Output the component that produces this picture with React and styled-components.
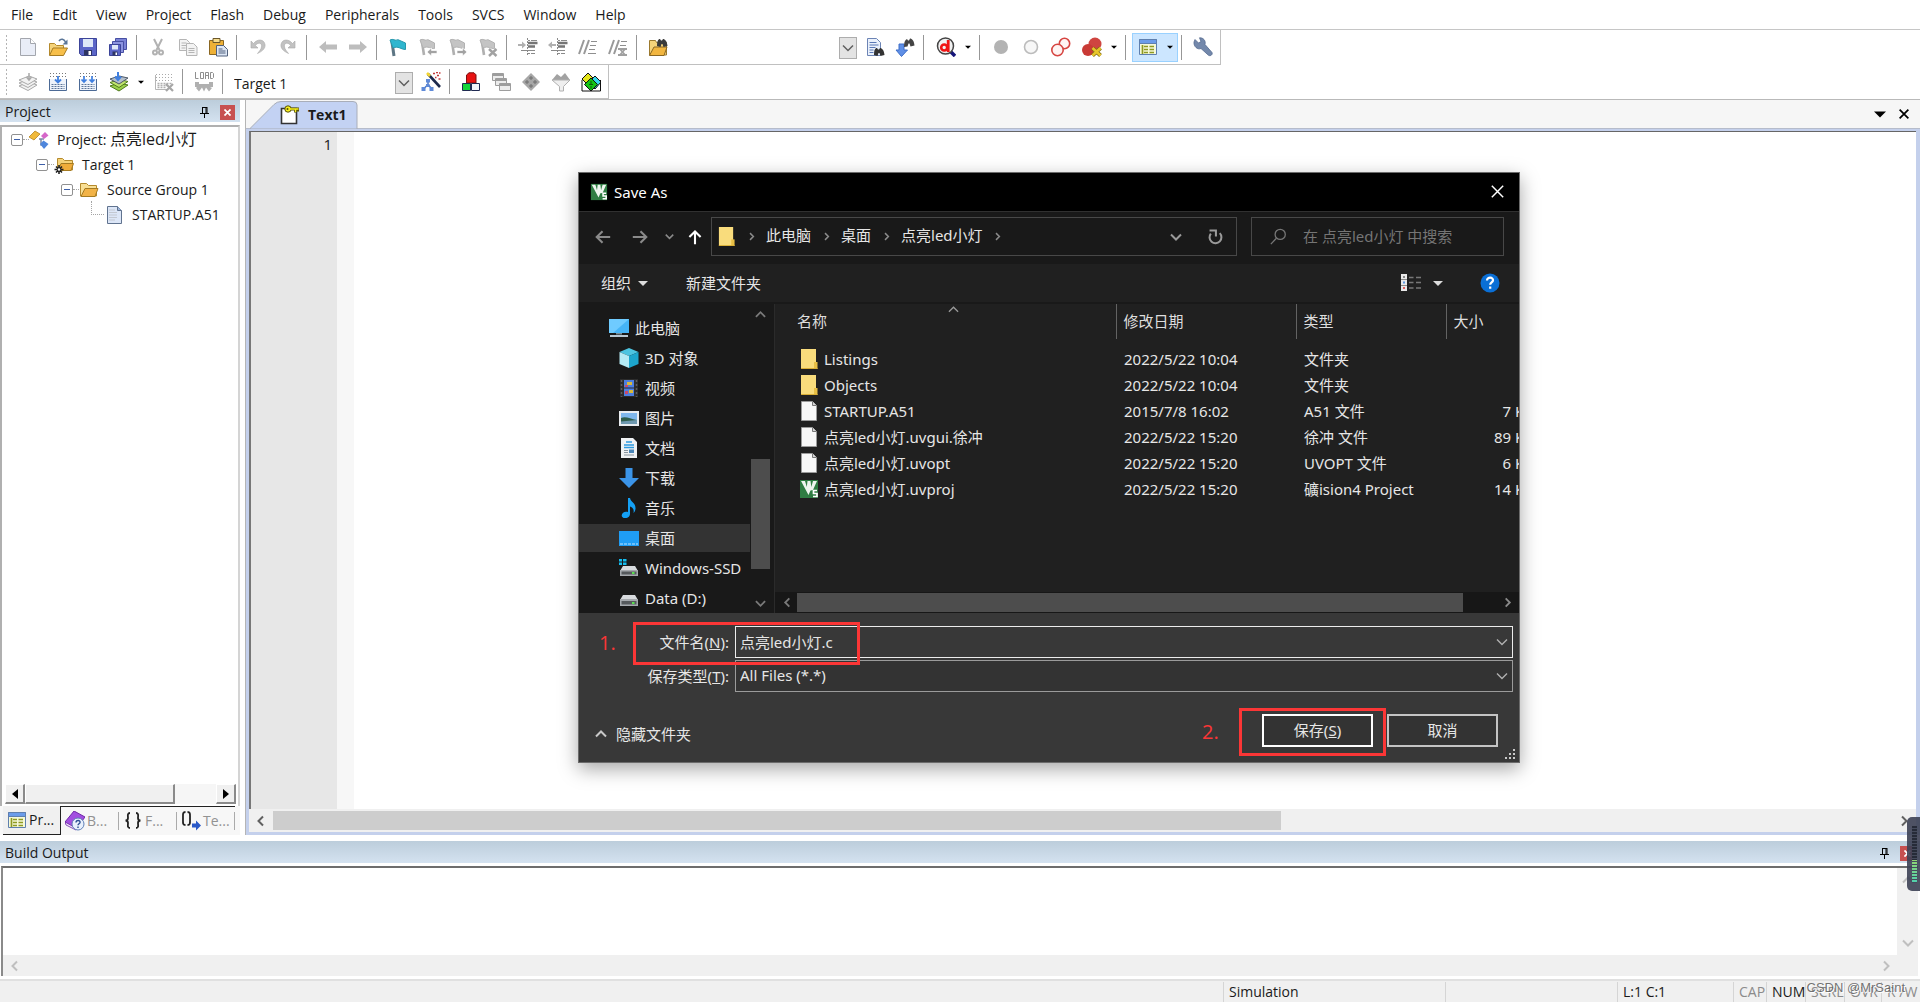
import styled, { createGlobalStyle, css } from "styled-components";

const GlobalStyle = createGlobalStyle`
  * {
    box-sizing: border-box;
  }

  body {
    margin: 0;
    background: #fff;
    color: #1a1a1a;
    font-family: "Open Sans", "Noto Sans CJK SC", sans-serif;
    font-size: 14px;
    line-height: 20px;
  }

  button,
  input,
  select,
  textarea {
    font: inherit;
    color: inherit;
    border: 0;
    padding: 0;
    margin: 0;
    background: none;
    border-radius: 0;
    outline: none;
  }

  svg {
    display: block;
    flex: none;
  }
`;

const Page = styled.div`
  position: relative;
  display: flex;
  flex-direction: column;
  height: 100vh;
  overflow: hidden;
`;

/* ---------- menu and toolbars ---------- */

const MenuBar = styled.nav`
  display: flex;
  gap: 19px;
  height: 29px;
  padding: 0 11px;
  align-items: center;
`;

const MenuItem = styled.button`
  white-space: nowrap;
`;

const ToolbarArea = styled.div`
  border-top: 1px solid #c6c6c6;
  border-bottom: 1px solid #b9b9b9;
`;

const Toolbar = styled.div`
  display: flex;
  align-items: center;
  width: max-content;
  height: 35px;
  padding-right: 2px;
  border-right: 1px solid #c0c0c0;
  border-bottom: 1px solid #c0c0c0;

  &:last-child {
    height: 34px;
  }
`;

const Grip = styled.span`
  width: 13px;
  height: 27px;
  background: radial-gradient(circle, #b4b4b4 1px, transparent 1px) 5px 0 / 3px 4px repeat-y;
`;

const ToolButton = styled.button`
  display: flex;
  align-items: center;
  justify-content: center;
  width: ${(props) => (props.$menu ? "46px" : "30px")};
  height: 29px;
  ${(props) =>
    props.$active &&
    css`
      background: #cce6ff;
      border: 1px solid #99d1ff;
    `}
`;

const CaretSlot = styled.span`
  margin-left: 9px;
`;

const Separator = styled.span`
  width: 1px;
  height: 25px;
  margin: 0 6px 0 3px;
  background: #979797;
`;

const ComboWrap = styled.div`
  position: relative;
  display: flex;
  align-items: center;
  width: ${(props) => props.$width};
  height: 24px;
  margin: 2px 3px 0 4px;
`;

const ComboSelect = styled.select`
  appearance: none;
  width: 100%;
  height: 24px;
  padding: 3px 0 0 1px;
`;

const ComboArrow = styled.span`
  position: absolute;
  right: 0;
  top: 1px;
  display: flex;
  align-items: center;
  justify-content: center;
  width: 18px;
  height: 22px;
  background: #e3e3e3;
  border: 1px solid #adadad;
  pointer-events: none;
`;

/* ---------- docked panels ---------- */

const Workspace = styled.div`
  display: flex;
  gap: 5px;
  flex: 1;
  min-height: 0;
  padding-bottom: 6px;
`;

const ProjectPanel = styled.aside`
  display: flex;
  flex-direction: column;
  width: 240px;
`;

const PanelHeader = styled.header`
  display: flex;
  align-items: center;
  height: 22px;
  padding: 2px 5px 0;
  background: linear-gradient(#bccddb, #d4e2f0);
`;

const PanelTitle = styled.h2`
  flex: 1;
  margin: 0;
  font-size: 14px;
  font-weight: 400;
`;

const PinButton = styled.button`
  margin-right: 11px;
`;

const CloseButton = styled.button`
  display: flex;
  align-items: center;
  justify-content: center;
  width: 15px;
  height: 15px;
  background: #c75050;
`;

const TreeBox = styled.div`
  display: flex;
  flex-direction: column;
  flex: 1;
  margin-top: 3px;
  padding: 0 2px 2px 3px;
  border: 2px solid #d4d4d4;
  border-left-color: #b0b0b0;
  border-top-color: #b0b0b0;
  border-bottom: 0;
`;

const Tree = styled.ul`
  flex: 1;
  margin: 0;
  padding: 0;
  list-style: none;
`;

const TreeRow = styled.li`
  display: flex;
  align-items: center;
  height: 25px;
  padding-left: ${(props) => `${props.$depth * 25 + 6}px`};
  white-space: nowrap;
`;

const TreeLabel = styled.span`
  margin-left: 8px;
`;

const ProjectName = styled.span`
  font-size: 16px;
`;

const Expander = styled.button`
  width: 12px;
  height: 12px;
  display: flex;
  align-items: center;
  justify-content: center;
  border: 1px solid #919191;
  border-radius: 2px;
  background: #fff;

  &::after {
    content: "";
    width: 6px;
    height: 1px;
    background: #3d5fa8;
  }
`;

const Dots = styled.span`
  width: 6px;
  border-top: 1px dotted #a5a5a5;
`;

const Elbow = styled.span`
  width: 13px;
  height: 14px;
  margin: 0 0 14px 5px;
  border-left: 1px dotted #a5a5a5;
  border-bottom: 1px dotted #a5a5a5;
`;

const ClassicScroll = styled.div`
  display: flex;
  height: 20px;
  background: #f6f6f6;
`;

const ClassicPart = styled.button`
  display: flex;
  align-items: center;
  justify-content: center;
  width: ${(props) => props.$width || "20px"};
  background: #f0f0f0;
  border: 1px solid #fff;
  border-right: 2px solid #8a8a8a;
  border-bottom: 2px solid #8a8a8a;

  &:last-child {
    margin-left: auto;
  }
`;

const DockTabs = styled.div`
  display: flex;
  height: 29px;
  padding-left: 3px;
  background: #f7f7f7;
`;

const DockTab = styled.button`
  position: relative;
  display: flex;
  align-items: center;
  gap: 2px;
  width: 58px;
  padding-left: 4px;
  color: #929292;
  border-top: 1px solid #222;
  white-space: nowrap;

  &::after {
    content: "";
    position: absolute;
    right: 0;
    top: 5px;
    height: 18px;
    border-right: 1px solid #aaa;
  }

  ${(props) =>
    props.$active &&
    css`
      color: #1a1a1a;
      background: #f0f0f0;
      border-top: 0;
      border-right: 1px solid #222;
      border-bottom: 1px solid #222;
      &::after {
        display: none;
      }
    `}
`;

/* ---------- editor ---------- */

const Editor = styled.main`
  display: flex;
  flex-direction: column;
  flex: 1;
  min-width: 0;
  border-left: 1px solid #b5b5b5;
`;

const TabStrip = styled.div`
  display: flex;
  align-items: flex-end;
  height: 29px;
  padding: 0 11px 0 4px;
  background: #f6f6f6;
  border-bottom: 1px solid #b6bccb;
`;

const FileTab = styled.button`
  position: relative;
  display: flex;
  align-items: center;
  gap: 9px;
  width: 108px;
  height: 27px;
  padding-left: 29px;
  font-weight: 700;
`;

const TabShape = styled.svg`
  position: absolute;
  inset: 0;
`;

const TabIcon = styled.span`
  position: relative;
`;

const TabText = styled.span`
  position: relative;
`;

const StripButtons = styled.div`
  display: flex;
  align-items: center;
  gap: 13px;
  height: 28px;
  margin-left: auto;
`;

const EditorFrame = styled.div`
  display: flex;
  flex-direction: column;
  flex: 1;
  border: 3px solid #c4d0ec;
  border-top-width: 2px;
  border-right-width: 4px;
`;

const CodeArea = styled.div`
  display: flex;
  flex: 1;
  border-top: 1px solid #666;
  border-left: 2px solid #777;
`;

const Gutter = styled.div`
  width: 86px;
  padding: 2px 5px 0 0;
  text-align: right;
  font-size: 15px;
  background: #e7e7e7;
`;

const FoldMargin = styled.div`
  width: 17px;
  background: #f7f7f7;
`;

const CodeInput = styled.textarea`
  flex: 1;
  resize: none;
`;

const ScrollTrack = styled.div`
  display: flex;
  align-items: center;
  flex-direction: ${(props) => (props.$vertical ? "column" : "row")};
  ${(props) => (props.$vertical ? "width" : "height")}: ${(props) => props.$size || "21px"};
  padding: ${(props) => (props.$vertical ? "2px 0" : "0 2px")};
  background: ${(props) => (props.$dark ? "#171717" : "#f0f0f0")};
`;

const ScrollArrow = styled.button`
  display: flex;
  align-items: center;
  justify-content: center;
  width: 20px;
  height: 20px;

  &:last-child {
    ${(props) => (props.$vertical ? "margin-top" : "margin-left")}: auto;
  }
`;

const EditorThumb = styled.span`
  width: calc(61% - 6px);
  height: 19px;
  margin-left: 2px;
  background: #cdcdcd;
`;

/* ---------- build output and status bar ---------- */

const BuildPanel = styled.section`
  display: flex;
  flex-direction: column;
  height: 138px;
`;

const BuildBox = styled.div`
  display: flex;
  flex-direction: column;
  flex: 1;
  margin: 3px 2px 3px 1px;
  border-top: 2px solid #6d6d6d;
  border-left: 2px solid #8a8a8a;
`;

const BuildBody = styled.div`
  display: flex;
  flex: 1;
`;

const BuildText = styled.textarea`
  flex: 1;
  resize: none;
`;

const BuildBottom = styled.div`
  padding-right: 20px;
  background: #f0f0f0;
`;

const StatusBar = styled.footer`
  display: flex;
  height: 23px;
  padding-top: 1px;
  background: #f0f0f0;
  border-top: 2px solid #e0e0e0;
`;

const StatusCell = styled.span`
  width: ${(props) => props.$width};
  padding-left: 5px;
  white-space: nowrap;
  color: ${(props) => (props.$off ? "#8b8b8b" : "#1a1a1a")};
  border-left: 1px solid #d5d5d5;
`;

const StatusSpace = styled.span`
  flex: 1;
`;

const Watermark = styled.span`
  position: absolute;
  right: 15px;
  bottom: 4px;
  font-family: "Liberation Sans", sans-serif;
  font-size: 13px;
  color: rgba(90, 90, 90, 0.85);
  text-shadow: 1px 1px 0 #fff;
`;

const LevelMeter = styled.div`
  position: absolute;
  right: 0;
  bottom: 111px;
  width: 13px;
  height: 74px;
  padding: 9px 3px 8px 5px;
  border-radius: 5px 0 0 5px;
  background: rgba(60, 64, 84, 0.9);
`;

const MeterBars = styled.div`
  height: 57px;
  background: repeating-linear-gradient(transparent 0 2px, #454b5c 2px 3px),
    linear-gradient(#262b38 60%, #8fd672 60%, #4fd1b0);
`;

/* ---------- save dialog ---------- */

const Dialog = styled.section`
  position: absolute;
  left: 578px;
  top: 172px;
  width: 942px;
  border: 1px solid #6b6b6b;
  background: #383838;
  color: #e6e6e6;
  font-family: "Noto Sans", "Noto Sans CJK SC", sans-serif;
  font-size: 15px;
  box-shadow: 0 6px 18px rgba(0, 0, 0, 0.35);
`;

const DialogTitle = styled.header`
  display: flex;
  align-items: center;
  gap: 6px;
  height: 39px;
  padding: 0 15px 1px 11px;
  background: #000;
  border-bottom: 1px solid #303030;
  color: #fff;
`;

const DialogName = styled.h1`
  flex: 1;
  margin: 0;
  font-size: 15px;
  font-weight: 400;
`;

const NavRow = styled.div`
  display: flex;
  align-items: center;
  height: 52px;
  padding: 0 15px 3px;
  background: #191919;
`;

const NavButton = styled.button`
  margin-right: ${(props) => props.$gap};
`;

const AddressBar = styled.div`
  display: flex;
  align-items: center;
  flex: 1;
  height: 39px;
  padding: 0 5px;
  border: 1px solid #484848;
`;

const Crumb = styled.a`
  padding-bottom: 3px;
  color: inherit;
  text-decoration: none;
`;

const CrumbArrow = styled.span`
  display: flex;
  justify-content: center;
  width: 30px;
`;

const AddressEnd = styled.div`
  display: flex;
  gap: 25px;
  align-items: center;
  margin-left: auto;
  padding-right: 7px;
`;

const SearchBox = styled.label`
  display: flex;
  align-items: center;
  gap: 16px;
  width: 253px;
  height: 39px;
  margin-left: 14px;
  padding-left: 18px;
  border: 1px solid #484848;
`;

const SearchInput = styled.input`
  min-width: 0;
  flex: 1;
  padding-bottom: 2px;

  &::placeholder {
    color: #757575;
    opacity: 1;
  }
`;

const CommandBar = styled.div`
  display: flex;
  align-items: center;
  height: 40px;
  padding: 0 19px 0 22px;
  background: #202020;
  border-bottom: 2px solid #191919;
`;

const Command = styled.button`
  display: flex;
  align-items: center;
  gap: 7px;
  margin-right: 38px;

  &:nth-child(2) {
    margin-right: auto;
  }
`;

const ViewButton = styled.button`
  display: flex;
  align-items: center;
  gap: 12px;
  margin-right: 37px;
`;

const DialogBody = styled.div`
  display: flex;
  height: 309px;
`;

const SideBar = styled.div`
  display: flex;
  width: 195px;
  background: #191919;
`;

const Places = styled.ul`
  flex: 1;
  margin: 0;
  padding: 10px 0 0;
  list-style: none;
  overflow: hidden;
`;

const Place = styled.li`
  display: flex;
  align-items: center;
  gap: 6px;
  height: 28px;
  margin: 0 0 2px;
  padding-left: ${(props) => (props.$root ? "30px" : "40px")};
  white-space: nowrap;
  background: ${(props) => (props.$selected ? "#333" : "none")};
`;

const SideScroll = styled.div`
  display: flex;
  flex-direction: column;
  align-items: center;
  width: 21px;
  margin-right: 3px;
`;

const SideThumb = styled.span`
  width: 19px;
  height: 110px;
  margin-top: 135px;
  background: #4d4d4d;
`;

const FileList = styled.div`
  display: flex;
  flex-direction: column;
  flex: 1;
  min-width: 0;
  background: #202020;
  border-left: 1px solid #2b2b2b;
`;

const TableClip = styled.div`
  flex: 1;
  overflow: hidden;
`;

const Table = styled.table`
  width: 759px;
  table-layout: fixed;
  border-collapse: collapse;
`;

const Th = styled.th`
  position: relative;
  width: ${(props) => props.$width};
  height: 35px;
  padding: 0 0 2px 7px;
  text-align: left;
  font-weight: 400;
  color: #dedede;
  border-left: 1px solid #636363;

  &:first-child {
    padding-left: 22px;
    border-left: 0;
  }
`;

const SortMark = styled.span`
  position: absolute;
  left: 173px;
  top: 0;
`;

const Td = styled.td`
  height: 26px;
  padding: 0 0 0 8px;
  white-space: nowrap;
  text-align: ${(props) => props.$align || "left"};
`;

const FileName = styled.span`
  display: flex;
  align-items: center;
  gap: 5px;
  padding-left: 16px;
`;

const TableGap = styled.tbody`
  height: 7px;
`;

const ListThumb = styled.span`
  width: 90%;
  height: 19px;
  background: #4d4d4d;
`;

const DialogFooter = styled.form`
  display: flex;
  flex-direction: column;
  padding: 13px 6px 15px 21px;
`;

const Field = styled.div`
  position: relative;
  display: flex;
  align-items: center;
  height: 32px;
  margin-bottom: 2px;
`;

const FieldLabel = styled.label`
  width: 129px;
  margin-right: 6px;
  text-align: right;
`;

const fieldBox = css`
  flex: 1;
  height: 32px;
  padding: 0 0 2px 4px;
`;

const NameInput = styled.input`
  ${fieldBox}
  border: 1px solid #ececec;
`;

const TypeSelect = styled.select`
  ${fieldBox}
  appearance: none;
  background: #333;
  border: 1px solid #9b9b9b;
`;

const FieldArrow = styled.span`
  position: absolute;
  right: 5px;
  top: 10px;
  pointer-events: none;
`;

const ActionRow = styled.div`
  display: flex;
  align-items: center;
  gap: 14px;
  margin-top: 20px;
  padding-right: 15px;
`;

const FolderToggle = styled.button`
  display: flex;
  align-items: center;
  gap: 9px;
  margin-right: auto;
  margin-left: -5px;
  padding-top: 6px;
`;

const ActionButton = styled.button`
  width: 111px;
  height: 33px;
  padding-bottom: 2px;
  background: #333;
  border: 2px solid ${(props) => (props.$primary ? "#fff" : "#c4c4c4")};
`;

const ResizeGrip = styled.svg`
  position: absolute;
  right: 3px;
  bottom: 2px;
`;

/* red callouts drawn over the dialog */
const Callout = styled.div`
  position: absolute;
  left: ${(props) => props.$left};
  top: ${(props) => props.$top};
  width: ${(props) => props.$width};
  height: ${(props) => props.$height};
  border: 3px solid #fb3636;
  pointer-events: none;
`;

const CalloutNumber = styled.span`
  position: absolute;
  left: ${(props) => props.$left};
  top: ${(props) => props.$top};
  font-family: "Open Sans", sans-serif;
  font-size: 20px;
  color: #fb3636;
`;

/* ---------- icons ---------- */

const Svg = ({ size = 20, children }) => (
  <svg width={size} height={size} viewBox="0 0 20 20" fill="none" aria-hidden="true">
    {children}
  </svg>
);

const Chevron = ({ dir = "down", color = "#606060", size = 12, weight = 2 }) => {
  const paths = {
    down: "M1 3.5 6 8.5 11 3.5",
    up: "M1 8.5 6 3.5 11 8.5",
    left: "M8 1.5 3.5 6 8 10.5",
    right: "M4 1.5 8.5 6 4 10.5",
  };
  return (
    <svg width={size} height={size} viewBox="0 0 12 12" fill="none" aria-hidden="true">
      <path d={paths[dir]} stroke={color} strokeWidth={weight} />
    </svg>
  );
};

const Caret = ({ color = "#000", width = 6 }) => (
  <svg width={width} height={width} viewBox="0 0 10 10" aria-hidden="true">
    <path d="M0 3h10L5 8z" fill={color} />
  </svg>
);

const Pin = () => (
  <svg width="9" height="11" viewBox="0 0 9 11" fill="none" aria-hidden="true">
    <path d="M2 0.5h5M2.5 0v6M6 0v6M7 0v6M0 6.5h9M4.5 7v4" stroke="#000" />
  </svg>
);

const Cross = ({ color = "#fff", size = 7, weight = 2 }) => (
  <svg width={size} height={size} viewBox="0 0 8 8" aria-hidden="true">
    <path d="M0.5 0.5 7.5 7.5M7.5 0.5 0.5 7.5" stroke={color} strokeWidth={weight} />
  </svg>
);

const GreyFlag = () => (
  <>
    <path d="M4 5 6 18" stroke="#b0b0b0" strokeWidth="2.6" />
    <path d="M2 3c3-2 5 1.500 8-.3L16.500 6v5.500C13 12 10 8.500 5 11z" fill="#c4c4c4" stroke="#b2b2b2" />
  </>
);

const icons = {
  newFile: (
    <>
      <path d="M2.500 1.500h10l5 5v12h-15z" fill="#e9edf7" stroke="#a3a6ad" />
      <path d="M12.500 1.500v5h5" fill="#fff" stroke="#a3a6ad" />
    </>
  ),
  open: (
    <>
      <path d="M1.500 18V6.500h5l2 2h7V12" fill="#f5d37a" stroke="#b58a2c" />
      <path d="M1.500 18.500 5 11h14.500l-4 7.500z" fill="#f7bf4a" stroke="#a57b22" />
      <path d="M11 4c2-3 5-2 6.500 1" stroke="#5b7698" strokeWidth="1.600" />
      <path d="M19.500 2.500v5h-5z" fill="#5b7698" />
    </>
  ),
  save: (
    <>
      <path d="M1.500 1.500h17v17h-15l-2-2z" fill="#5c66c8" stroke="#3c4499" />
      <path d="M5 2h10v8H5z" fill="#dfe8f8" />
      <path d="M6 13h8v5.500H6z" fill="#2d3463" />
      <path d="M10.500 14h2.500v4h-2.500z" fill="#fff" />
    </>
  ),
  saveAll: (
    <>
      <path d="M7.500 1.500h11v11h-11z" fill="#7b83d6" stroke="#474fa3" />
      <path d="M4.500 4.500h11v11h-11z" fill="#8b93df" stroke="#474fa3" />
      <path d="M1.500 7.500h11v11h-11z" fill="#5c66c8" stroke="#3c4499" />
      <path d="M4 8h6v4.500H4z" fill="#dfe8f8" />
      <path d="M4.500 14.500h5v4h-5z" fill="#2d3463" />
      <path d="M7.500 15.500h1.500v2.500H7.500z" fill="#fff" />
    </>
  ),
  cut: (
    <g stroke="#b2b2b2" strokeWidth="2">
      <path d="M6 2 11.500 13M14 2 8.500 13" />
      <circle cx="7" cy="15.500" r="2" />
      <circle cx="13" cy="15.500" r="2" />
    </g>
  ),
  copy: (
    <g fill="#f3f3f3" stroke="#b5b5b5">
      <path d="M1.500 2.500h7l3 3v8h-10z" />
      <path d="M3.500 6h5M3.500 8.500h5M3.500 11h4" />
      <path d="M8.500 6.500h7l3.500 3.500v8.500H8.500z" />
      <path d="M10.500 11.500h6M10.500 13.500h6M10.500 15.500h6" />
    </g>
  ),
  paste: (
    <>
      <path d="M1.500 3.500h14v14h-14z" fill="#eeb137" stroke="#8a6722" />
      <path d="M5 1.500h7v4H5z" fill="#f6dc8c" stroke="#6b572b" />
      <path d="M8.500 8.500h7l4 4v6.500h-11z" fill="#dce6f5" stroke="#51617c" />
      <path d="M10.500 12h4M10.500 14h7M10.500 16h7" stroke="#51617c" />
    </>
  ),
  undo: (
    <path
      d="M3 4v7h7l-2.600-2.500C10 4.500 14.500 6 13.500 10c-.5 2.500-2 4-4 6.500C15 14 17.500 11 17 7.500 16 2 9.500 1.500 5.500 6.500z"
      fill="#c2c2c2"
      stroke="#aaa"
      strokeWidth=".6"
    />
  ),
  redo: (
    <path
      d="M17 4v7h-7l2.600-2.500C10 4.500 5.500 6 6.500 10c.5 2.500 2 4 4 6.500C5 14 2.500 11 3 7.500 4 2 10.500 1.500 14.500 6.500z"
      fill="#c2c2c2"
      stroke="#aaa"
      strokeWidth=".6"
    />
  ),
  back: <path d="M1 10 8 4v3.500h11v5H8V16z" fill="#bdbdbd" />,
  forward: <path d="M19 10 12 4v3.500H1v5h11V16z" fill="#bdbdbd" />,
  flag: (
    <>
      <path d="M4 5 6 19" stroke="#5d7684" strokeWidth="3" />
      <path d="M2 3c3-2 5 1.500 8-.3L17.500 6v6.500C13 12.500 10 8.500 5 11z" fill="#2fb6cf" stroke="#2798ad" />
    </>
  ),
  flagPrev: (
    <>
      <GreyFlag />
      <path d="m9 15 4.500-4v2.500H19v3h-5.500V19z" fill="#a2a2a2" stroke="#fff" strokeWidth=".7" />
    </>
  ),
  flagNext: (
    <>
      <GreyFlag />
      <path d="m19 15-4.500-4v2.500H9v3h5.500V19z" fill="#a2a2a2" stroke="#fff" strokeWidth=".7" />
    </>
  ),
  flagClear: (
    <>
      <GreyFlag />
      <path d="m11 12 7.500 7M18.500 12 11 19" stroke="#a2a2a2" strokeWidth="2.400" />
    </>
  ),
  indent: (
    <>
      <path d="M10 3.500h2M13 3.500h6M10 16.500h2M13 16.500h4M3 13.500h14" stroke="#8a8a8a" />
      <path d="M10 6h9.500M10 9.500h7" stroke="#757575" strokeWidth="2.400" />
      <path d="M9.500 1v18" stroke="#8a8a8a" strokeDasharray="2 1" />
      <path d="M8 8 4 4.500V7H0v2h4v2.500z" fill="#b0b0b0" />
    </>
  ),
  outdent: (
    <>
      <path d="M10 3.500h2M13 3.500h6M10 16.500h2M13 16.500h4M3 13.500h14" stroke="#8a8a8a" />
      <path d="M10 6h9.500M10 9.500h7" stroke="#757575" strokeWidth="2.400" />
      <path d="M9.500 1v18" stroke="#8a8a8a" strokeDasharray="2 1" />
      <path d="m0 8 4-3.500V7h4v2H4v2.500z" fill="#b0b0b0" />
    </>
  ),
  comment: (
    <>
      <path d="M1 17 6 3M6 17l5-14" stroke="#999" strokeWidth="2" />
      <path d="M13 4.500h6M12 8.500h6M11 12.500h6M10 16.500h8" stroke="#8f8f8f" />
    </>
  ),
  uncomment: (
    <>
      <path d="M1 17 6 3M6 17l5-14" stroke="#999" strokeWidth="2" />
      <path d="M13 4.500h6M12 8.500h6" stroke="#8f8f8f" />
      <path d="M10 12h9M10 18h9M11.500 11.500l6 7M17.500 11.500l-6 7" stroke="#a0a0a0" strokeWidth="1.800" />
    </>
  ),
  findInFiles: (
    <>
      <path d="M1.500 18V3.500h6l1 2h10V18z" fill="#f5d37a" stroke="#9c7a2e" />
      <path d="M1.500 18.500 6 10h13l-3 8.500z" fill="#f2b640" stroke="#8a6722" />
      <path d="M9 9c0-5 1-7 3-7l1 1.500h1L15 2c2 0 4 2 4.500 7l-4 1-1-3h-1l-1 3z" fill="#3a3a3a" />
    </>
  ),
  find: (
    <>
      <path d="M2.500 1.500h9l4 4v13h-13z" fill="#eaf1fc" stroke="#6c84b5" />
      <path d="M4.500 5.500h7M4.500 8h9M4.500 10.500h6M4.500 13h4M4.500 15.500h4" stroke="#5a78b5" />
      <path d="M9 18c0-5 1-7 3-7l1 1.500h1l1-1.500c2 0 4 2 4.500 7l-4 1-1-3h-1l-1 3z" fill="#333" />
    </>
  ),
  incFind: (
    <>
      <path d="M4 7h5v6h3.500l-6 6.500L1 13h3z" fill="#5f8fe6" stroke="#3f6fc8" />
      <path d="M9 10c0-5 1-7 3-8l1 1.500h1L15 1.500c2 0 4 2 4.500 7l-4 1-1-3h-1l-1 3z" fill="#444" />
    </>
  ),
  debug: (
    <>
      <path d="m14 14 5 5" stroke="#15157a" strokeWidth="3.500" />
      <circle cx="9.500" cy="9" r="8" fill="#f1f1f1" stroke="#444" strokeWidth="1.500" />
      <circle cx="8.200" cy="10.500" r="3" stroke="#f01414" strokeWidth="2.600" />
      <path d="M12.200 3v12" stroke="#f01414" strokeWidth="2.800" />
    </>
  ),
  breakpoint: <circle cx="10" cy="10" r="7" fill="#b3b3b3" />,
  breakpointOff: <circle cx="10" cy="10" r="6.500" fill="#f7f7f7" stroke="#bcbcbc" strokeWidth="1.600" />,
  disableAll: (
    <g fill="#fff4f3" stroke="#d64541" strokeWidth="1.600">
      <circle cx="13.500" cy="6.500" r="5.200" />
      <circle cx="6.500" cy="13" r="5.700" />
    </g>
  ),
  killAll: (
    <>
      <circle cx="13" cy="7" r="6.500" fill="#cf4540" />
      <circle cx="6" cy="13" r="6" fill="#c93a35" />
      <path d="m10.500 11 8 7.500M18.500 11l-8 7.500" stroke="#7f6a10" strokeWidth="4" />
      <path d="m10.500 11 8 7.500M18.500 11l-8 7.500" stroke="#e8c62c" strokeWidth="2.600" />
    </>
  ),
  windows: (
    <>
      <path d="M1.500 2.500h17v15h-17z" fill="#f6f9d8" stroke="#5f7fae" />
      <path d="M1.500 2.500h17v4h-17z" fill="#6b9cea" stroke="#5f7fae" />
      <path d="M4.500 8v9M6 9.500h4M6 12.500h4M6 15.500h4M11.500 9.500H16M11.500 12.500H16M11.500 15.500H16" stroke="#8f9a22" strokeWidth="1.700" />
    </>
  ),
  wrench: (
    <path
      d="M2 2.500 5.500 6 8 4.500 6.500.8C10.500.5 13 4 12 7.500l7 8c1 2-1.500 4-3.500 2.800L8 11.500C4.500 13 .5 9.500 1 5z"
      fill="#7388ab"
      stroke="#54698f"
      strokeWidth=".8"
    />
  ),
  translate: (
    <g fill="#f2f2f2" stroke="#a9a9a9">
      <path d="m1 14 10-4 8 3-9 5.500z" />
      <path d="m1 11 10-4 8 3-9 5.500z" />
      <path d="m1 8 10-4 8 3-9 5.500z" />
      <path d="M11 1v6M8.500 5l2.500 3 2.500-3" strokeWidth="1.500" />
    </g>
  ),
  build: (
    <>
      <path d="M1.500 7v11.500h17V7" fill="#eef3fb" stroke="#4c6a96" />
      <path d="M2 1.500h17M2 4.500h17" stroke="#777" strokeDasharray="1 2" />
      <path d="M3.500 12.500h13M3.500 14.500h13M3.500 16.500h13" stroke="#5e7699" strokeDasharray="2 1" />
      <path d="M10 4v6M7 7.500l3 3 3-3" stroke="#3f7fe0" strokeWidth="1.800" />
    </>
  ),
  rebuild: (
    <>
      <path d="M1.500 7v11.500h17V7" fill="#eef3fb" stroke="#4c6a96" />
      <path d="M2 1.500h17M2 4.500h17" stroke="#777" strokeDasharray="1 2" />
      <path d="M3.500 12.500h13M3.500 14.500h13M3.500 16.500h13" stroke="#5e7699" strokeDasharray="2 1" />
      <path d="M6 4v6M3.500 7.500 6 10l2.500-2.500M14 4v6M11.500 7.500 14 10l2.500-2.500" stroke="#3f7fe0" strokeWidth="1.700" />
    </>
  ),
  batch: (
    <>
      <path d="m1 14 9-3 9 2-9 6z" fill="#9bd04a" stroke="#4f7a1c" />
      <path d="m1 10.500 9-3 9 2-9 6z" fill="#bfe36b" stroke="#4f7a1c" />
      <path d="m1 7 9-3 9 2-9 6z" fill="#b4bfcb" stroke="#4d5866" />
      <path d="M9 0v6M6 4.500l3 3.500 3-3.500" stroke="#3f7fe0" strokeWidth="2" />
    </>
  ),
  stopBuild: (
    <>
      <path d="M1.500 3v14.500h12" stroke="#b5b5b5" />
      <path d="M2 2.500h17M2 5.500h17M2 8.500h17" stroke="#aaa" strokeDasharray="1 2" />
      <path d="M3.500 11.500h15M3.500 13.500h10M3.500 15.500h9" stroke="#b0b0b0" strokeWidth="1.500" strokeDasharray="2 1" />
      <path d="m12 12 7 7M19 12l-7 7" stroke="#a6a6a6" strokeWidth="2.200" />
    </>
  ),
  load: (
    <>
      <path
        d="M1.500 0v6.500h3M6.500.5h3v6h-3zM11.500 7V.5h3V7M11.500 3.500h3M16.500.5h2l1 1v4l-1 1h-2z"
        stroke="#8f8f8f"
      />
      <path d="M1 10h4v2h10v-2h4v5h-3l2 1-3 3.500-3-4-2 4-2-4-3 4L2 16l1-1H1z" fill="#b0b0b0" />
    </>
  ),
  options: (
    <>
      <path d="m7 2 12 13" stroke="#1d2a4c" strokeWidth="2.600" />
      <path d="m6 1 3 3" stroke="#f3d533" strokeWidth="2.600" />
      <path d="M12 1.500h2M16 3.500h2M15 .5h2M18 1h1.500M17.500 7h2M14 5.500h1.500" stroke="#c43a3a" strokeWidth="1.600" />
      <path d="M7 8v5M7 12.500l-4 4M7 12.500l3.500 4" stroke="#4d76c0" strokeWidth="1.500" />
      <path d="M5 7h4v3.500H5zM.5 15h4v4h-4zM8.500 15h4v4h-4zM5 12h3.500v3H5z" fill="#5f8ad8" />
    </>
  ),
  manage: (
    <>
      <path d="M5.500 3 8 .8h5l2 2V11h-9.500z" fill="#e81313" stroke="#7b1010" />
      <path d="M1.500 11.500h8v7h-8z" fill="#16d43c" stroke="#202a52" />
      <path d="M10.500 11.500h8v7h-8z" fill="#f2f5fb" stroke="#202a52" />
    </>
  ),
  multi: (
    <g fill="#ececec" stroke="#9d9d9d">
      <path d="M1.500 1.500h11v7h-11z" />
      <path d="M4.500 6.500h11v7h-11z" />
      <path d="M8.500 11.500h11v7h-11z" />
      <path d="M1.500 3h11M4.500 8h11M8.500 13h11" strokeWidth="2" />
    </g>
  ),
  packs: (
    <>
      <path d="m10 1 9 9-9 9-9-9z" fill="#a7a7a7" />
      <path d="M10 4v4M10 12v4M4 10h4M12 10h4M8 6h4M8 14h4M6 8v4M14 8v4" stroke="#6f6f6f" />
    </>
  ),
  filter: (
    <>
      <path d="m1 8 5-6 4 3 4-4 5 7z" fill="#a2a2a2" />
      <path d="M1 8h18l-6.500 6.500V19h-4v-4.500z" fill="#efefef" stroke="#b0b0b0" />
    </>
  ),
  installer: (
    <>
      <path d="M1 8v11h18.500V8" fill="#fff" stroke="#111" />
      <path d="m7 1 6 6-6 6-6-6z" fill="#e6e619" stroke="#111" />
      <path d="m14 4 6 6-6 7-6-7z" fill="#35d6e8" stroke="#111" />
      <path d="m10 6 6.500 6.500L10 19l-6.500-6.500z" fill="#14c414" stroke="#111" />
      <path d="M10 9v3M8 12.500h4M10 14v3" stroke="#0a5b0a" />
    </>
  ),
  project: (
    <>
      <path d="M10 9h5M12 9v6h3" stroke="#7c8aa5" strokeWidth="1.500" />
      <path d="m0 7 6-6 5 3-6 6z" fill="#f0b93a" stroke="#b58420" strokeWidth=".8" />
      <path d="m12 6 4-4 3.500 3.500L15 9z" fill="#d667c9" />
      <path d="m11 14 3.500-3.500L19.500 14 15 19z" fill="#4e86dc" />
    </>
  ),
  target: (
    <>
      <path d="M3.500 15V3.500h5l2 2h8V15z" fill="#f5d37a" stroke="#b58a2c" />
      <path d="M4 15.500 7 8.500h12.500l-2.500 7z" fill="#f0ac3a" stroke="#a57b22" />
      <path d="M5 10v9M.5 14.500h9M2 11.500l6 6M8 11.500l-6 6" stroke="#222" strokeWidth="1.600" />
      <circle cx="5" cy="14.500" r="1.200" fill="#fff" />
    </>
  ),
  group: (
    <>
      <path d="M1.500 16V3.500h6l2 2h8V16z" fill="#f8df95" stroke="#b58a2c" />
      <path d="m2 16.500 4-8h13l-3 8z" fill="#f2b347" stroke="#a57b22" />
    </>
  ),
  source: (
    <>
      <path d="M3.500 1.500h10l4 4v13h-14z" fill="#dce6f7" stroke="#60738f" />
      <path d="M13.500 1.500v4h4" fill="#9db5da" stroke="#60738f" />
      <path d="M5.500 5h5M5.500 7.500h7M5.500 10h8M5.500 12.500h7M5.500 15h6" stroke="#aaa" strokeDasharray="1 1" />
    </>
  ),
  book: (
    <>
      <path d="M0 11 9 0l11 6-9 12z" fill="#a24fe0" stroke="#6f27a8" />
      <path d="m0 11 1 3 10 5v-2z" fill="#efe4fa" stroke="#6f27a8" strokeWidth=".8" />
      <circle cx="13" cy="13" r="6" fill="#e8f0fc" stroke="#5e80b8" />
      <path d="M11 11.500c0-3 4.500-2.500 4 0-.3 1.300-2 1.300-2 2.800M13 15.500V17" stroke="#2b4f92" strokeWidth="1.400" />
    </>
  ),
  functions: (
    <path
      d="M7 2C4 2 5 5 5 7S4 9.500 2.500 9.500C4 9.500 5 10 5 12s-1 5 2 5M13 2c3 0 2 3 2 5s1 2.500 2.500 2.500C16 9.500 15 10 15 12s1 5-2 5"
      stroke="#222"
      strokeWidth="1.800"
    />
  ),
  templates: (
    <>
      <path d="M4.500 1C1.500 1 2 3 2 7.500S1.500 14 4.500 14M6.500 1c3 0 2.500 2 2.500 6.500S9.500 14 6.500 14" stroke="#222" strokeWidth="1.800" />
      <path d="M11 12.500h4v-3l5 5-5 5v-3h-4z" fill="#2a59c8" />
    </>
  ),
  textDoc: (
    <>
      <path d="M2.500 3.500h15v15h-15z" fill="#fff" stroke="#333" strokeWidth="1.600" />
      <path d="M9.500 4h10.500M16.500 4v3.500M18.800 4v2.500" stroke="#55500a" strokeWidth="3" />
      <circle cx="9" cy="4" r="3.200" fill="#f6ee1e" stroke="#55500a" />
      <path d="M11 4h8.500M16.500 4v3" stroke="#f6ee1e" strokeWidth="1.400" />
      <circle cx="8.500" cy="4" r="1" fill="#55500a" />
    </>
  ),
  keil: (
    <>
      <path d="M1 1h18v18H1z" fill="#2f7d43" />
      <path d="M2 2h4l1.800 6L8.500 2h3l.8 6L14 2h4l-4 9-2.500.5L9.500 16z" fill="#eef5ef" />
      <path d="M18 11.500h-3.500v3H18v3h-4" stroke="#fff" strokeWidth="1.700" />
    </>
  ),
  folder: (
    <>
      <path d="M2 0h15v20H2z" fill="#f9dc7c" />
      <path d="M15 13h3.500v7H15z" fill="#e8bf45" />
      <path d="M2 19h16.500v1H2z" fill="#d9ae36" />
    </>
  ),
  file: (
    <>
      <path d="M2.500.5h11l4 4v15h-15z" fill="#f7f7f7" stroke="#9a9a9a" />
      <path d="M13.500.5v4h4" fill="#d5d5d5" stroke="#777" />
    </>
  ),
  computer: (
    <>
      <path d="M0 1h20v14H0z" fill="#45b4f7" />
      <path d="M0 1h20L4 15H0z" fill="#6fcbff" />
      <path d="M7 15h6v1.500H7z" fill="#78909c" />
      <path d="M1 17h18v2H1z" fill="#b8c8d4" />
    </>
  ),
  cube: (
    <>
      <path d="m10 0 9.500 4L10 8 .5 4z" fill="#4dc4e0" />
      <path d="M.5 4 10 8v12L.5 16z" fill="#b5eaf4" />
      <path d="M19.500 4 10 8v12l9.500-4z" fill="#1da5cc" />
    </>
  ),
  video: (
    <>
      <path d="M1 1h18v18H1z" fill="#2c2c2c" />
      <path d="M5 2h10v7.500H5zM5 10.500h10V18H5z" fill="#4e7fe0" />
      <path d="M8 4h5v3H8zM10 12h4v3h-4z" fill="#d9b93a" />
      <path d="M6 7h3v2H6zM6 13h3v3H6z" fill="#c94a6a" />
      <path d="M2.500 2v17M17.500 2v17" stroke="#5c5c5c" strokeWidth="1.500" strokeDasharray="2 2" />
    </>
  ),
  picture: (
    <>
      <path d="M0 3h20v15H0z" fill="#e9ecef" />
      <path d="M2 5h16v11H2z" fill="#7fb7ec" />
      <path d="M2 10c5-2 9 1 16 2v4H2z" fill="#2f5e4c" />
      <path d="M2 13.500 18 12v4H2z" fill="#6f99b0" />
    </>
  ),
  document: (
    <>
      <path d="M2 0h12l4 4v16H2z" fill="#f0f2f4" />
      <path d="M7 4h6M5 7h10M5 9.500h10" stroke="#2f9be0" strokeWidth="1.600" />
      <path d="M5 12.500h4M5 14.500h4M5 17h10" stroke="#8a96a0" />
      <path d="M10 11.500h5V15h-5z" fill="#4a86b8" />
    </>
  ),
  download: <path d="M6.500 0h7v10H20l-10 10L0 10h6.500z" fill="#3b94e8" />,
  music: (
    <path
      d="M9 0h2c.5 4 6 4.500 5.500 11-.3 2-1 3-2 4 .8-4-1-5.500-3.500-6.500V16c-.3 5-8 5.500-8.300 1.500C2.800 14 6.500 13 9 14z"
      fill="#14a0f5"
    />
  ),
  desktop: (
    <>
      <path d="M0 3h20v15H0z" fill="#1f9df5" />
      <path d="M1 16h18" stroke="#bde3ff" strokeDasharray="3 1" />
    </>
  ),
  windowsDisk: (
    <>
      <path d="M0 1h3v2.500H0zM4 1h3.500v2.500H4zM0 4.500h3V7H0zM4 4.500h3.500V7H4z" fill="#14bdf0" />
      <path d="M4 8h12l3 5H1z" fill="#d8dbde" />
      <path d="M1 12h18v6H1z" fill="#a5a9ad" />
      <path d="M2.500 13.500h15v3h-15z" fill="#55595c" />
      <path d="M13 14h2.500v2H13z" fill="#59e04f" />
    </>
  ),
  disk: (
    <>
      <path d="M4 7h12l3 5H1z" fill="#d8dbde" />
      <path d="M1 11h18v7H1z" fill="#a5a9ad" />
      <path d="M2.500 13h15v3.500h-15z" fill="#55595c" />
      <path d="M13 14h2.500v2H13z" fill="#59e04f" />
    </>
  ),
  arrowLeft: <path d="M18 10H3M9.500 3.500 3 10l6.500 6.500" stroke="#8a8a8a" strokeWidth="2.300" />,
  arrowRight: <path d="M2 10h15M10.500 3.500 17 10l-6.500 6.500" stroke="#8a8a8a" strokeWidth="2.300" />,
  arrowUp: <path d="M10 19V3M3 10l7-7 7 7" stroke="#fff" strokeWidth="2.600" />,
  refresh: (
    <>
      <path d="M4.500 6.500a7 7 0 1 0 10.500-.5" stroke="#9a9a9a" strokeWidth="2.400" />
      <path d="M3 3h7.500v7" stroke="#9a9a9a" strokeWidth="2.400" />
    </>
  ),
  search: (
    <>
      <circle cx="12" cy="7.500" r="6" stroke="#777" strokeWidth="1.500" />
      <path d="M7.500 12 1 19" stroke="#777" strokeWidth="1.500" />
    </>
  ),
  views: (
    <>
      <path d="M0 1h6v17H0z" fill="#e8e8e8" />
      <path d="M0 6.500h6M0 12.500h6" stroke="#888" />
      <path d="M3 3v2" stroke="#666" strokeWidth="1.500" />
      <path d="M3 8.500v2" stroke="#2f7fe0" strokeWidth="1.500" />
      <path d="M3 14v2" stroke="#d33" strokeWidth="1.500" />
      <path d="M8 4.500h4.500M15 4.500h5M8 9.500h4.500M15 9.500h5M8 15h4.500M15 15h5" stroke="#777" strokeWidth="1.400" />
    </>
  ),
  help: (
    <>
      <circle cx="10" cy="10" r="9.500" fill="#0a6fd6" />
      <path d="M7 7.500c0-4 6.500-3.500 6 0-.3 2-2.800 2-2.800 4.300M10.200 13.500v2.200" stroke="#fff" strokeWidth="2.200" />
    </>
  ),
};

const Icon = ({ name, size }) => <Svg size={size}>{icons[name]}</Svg>;

/* ---------- data ---------- */

const menus = [
  "File",
  "Edit",
  "View",
  "Project",
  "Flash",
  "Debug",
  "Peripherals",
  "Tools",
  "SVCS",
  "Window",
  "Help",
];

const fileTools = [
  ["newFile", "open", "save", "saveAll"],
  ["cut", "copy", "paste"],
  ["undo", "redo"],
  ["back", "forward"],
  ["flag", "flagPrev", "flagNext", "flagClear"],
  ["indent", "outdent", "comment", "uncomment"],
  ["findInFiles"],
];

const treeData = [
  { icon: "project", label: "Project: ", name: "点亮led小灯" },
  { icon: "target", label: "Target 1" },
  { icon: "group", label: "Source Group 1" },
  { icon: "source", label: "STARTUP.A51", leaf: true },
];

const dockTabs = [
  { icon: "windows", label: "Pr..." },
  { icon: "book", label: "B..." },
  { icon: "functions", label: "F..." },
  { icon: "templates", label: "Te..." },
];

const places = [
  { icon: "computer", label: "此电脑", root: true },
  { icon: "cube", label: "3D 对象" },
  { icon: "video", label: "视频" },
  { icon: "picture", label: "图片" },
  { icon: "document", label: "文档" },
  { icon: "download", label: "下载" },
  { icon: "music", label: "音乐" },
  { icon: "desktop", label: "桌面", selected: true },
  { icon: "windowsDisk", label: "Windows-SSD" },
  { icon: "disk", label: "Data (D:)" },
];

const files = [
  { icon: "folder", name: "Listings", date: "2022/5/22 10:04", type: "文件夹", size: "" },
  { icon: "folder", name: "Objects", date: "2022/5/22 10:04", type: "文件夹", size: "" },
  { icon: "file", name: "STARTUP.A51", date: "2015/7/8 16:02", type: "A51 文件", size: "7 KB" },
  { icon: "file", name: "点亮led小灯.uvgui.徐冲", date: "2022/5/22 15:20", type: "徐冲 文件", size: "89 KB" },
  { icon: "file", name: "点亮led小灯.uvopt", date: "2022/5/22 15:20", type: "UVOPT 文件", size: "6 KB" },
  { icon: "keil", name: "点亮led小灯.uvproj", date: "2022/5/22 15:20", type: "礦ision4 Project", size: "14 KB" },
];

const statusCells = [
  { label: "Simulation", width: "222px" },
  { label: "", width: "172px" },
  { label: "L:1 C:1", width: "116px" },
  { label: "CAP", width: "33px", off: true },
  { label: "NUM", width: "39px" },
  { label: "SCRL", width: "39px", off: true },
  { label: "OVR", width: "37px", off: true },
  { label: "R /W", width: "39px", off: true },
];

/* ---------- sections ---------- */

const Tool = ({ name, menu, active }) => (
  <ToolButton type="button" aria-label={name} $menu={menu} $active={active}>
    <Icon name={name} />
    {menu && (
      <CaretSlot>
        <Caret />
      </CaretSlot>
    )}
  </ToolButton>
);

const Combo = ({ label, value, width }) => (
  <ComboWrap $width={width}>
    <ComboSelect aria-label={label}>
      <option>{value}</option>
    </ComboSelect>
    <ComboArrow>
      <Chevron weight={1.5} />
    </ComboArrow>
  </ComboWrap>
);

const Toolbars = () => (
  <ToolbarArea>
    <Toolbar>
      <Grip />
      {fileTools.map((group, i) => [
        i > 0 && <Separator key={`sep-${i}`} />,
        ...group.map((name) => <Tool key={name} name={name} />),
      ])}
      <Combo label="Find" value="" width="180px" />
      <Tool name="find" />
      <Tool name="incFind" />
      <Separator />
      <Tool name="debug" menu />
      <Separator />
      <Tool name="breakpoint" />
      <Tool name="breakpointOff" />
      <Tool name="disableAll" />
      <Tool name="killAll" menu />
      <Separator />
      <Tool name="windows" menu active />
      <Separator />
      <Tool name="wrench" />
    </Toolbar>
    <Toolbar>
      <Grip />
      <Tool name="translate" />
      <Tool name="build" />
      <Tool name="rebuild" />
      <Tool name="batch" menu />
      <Tool name="stopBuild" />
      <Separator />
      <Tool name="load" />
      <Separator />
      <Combo label="Target" value="Target 1" width="180px" />
      <Tool name="options" />
      <Separator />
      <Tool name="manage" />
      <Tool name="multi" />
      <Tool name="packs" />
      <Tool name="filter" />
      <Tool name="installer" />
    </Toolbar>
  </ToolbarArea>
);

const ProjectView = () => (
  <ProjectPanel>
    <PanelHeader>
      <PanelTitle>Project</PanelTitle>
      <PinButton type="button" aria-label="Pin">
        <Pin />
      </PinButton>
      <CloseButton type="button" aria-label="Close">
        <Cross />
      </CloseButton>
    </PanelHeader>
    <TreeBox>
      <Tree>
        {treeData.map((node, depth) => (
          <TreeRow key={node.label} $depth={depth}>
            {node.leaf ? (
              <Elbow />
            ) : (
              <>
                <Expander type="button" aria-label={`Collapse ${node.label}`} />
                <Dots />
              </>
            )}
            <Icon name={node.icon} />
            <TreeLabel>
              {node.label}
              {node.name && <ProjectName>{node.name}</ProjectName>}
            </TreeLabel>
          </TreeRow>
        ))}
      </Tree>
      <ClassicScroll>
        <ClassicPart type="button" aria-label="Scroll left">
          <svg width="6" height="10" viewBox="0 0 6 10">
            <path d="M6 0v10L0 5z" />
          </svg>
        </ClassicPart>
        <ClassicPart type="button" aria-label="Scroll thumb" $width="150px" />
        <ClassicPart type="button" aria-label="Scroll right">
          <svg width="6" height="10" viewBox="0 0 6 10">
            <path d="M0 0v10l6-5z" />
          </svg>
        </ClassicPart>
      </ClassicScroll>
    </TreeBox>
    <DockTabs>
      {dockTabs.map((tab, i) => (
        <DockTab key={tab.label} type="button" $active={i === 0}>
          <Icon name={tab.icon} />
          {tab.label}
        </DockTab>
      ))}
    </DockTabs>
  </ProjectPanel>
);

const EditorView = () => (
  <Editor>
    <TabStrip>
      <FileTab type="button">
        <TabShape width="108" height="28" viewBox="0 0 108 28">
          <path d="M0.500 27 24 3.500Q27 .5 31 .5H103Q107 .5 107 4V28H0z" fill="#c3d2f3" stroke="#a9aeb9" />
        </TabShape>
        <TabIcon>
          <Icon name="textDoc" />
        </TabIcon>
        <TabText>Text1</TabText>
      </FileTab>
      <StripButtons>
        <button type="button" aria-label="Open files">
          <Caret width={12} />
        </button>
        <button type="button" aria-label="Close file">
          <Cross color="#000" size={10} weight={1.4} />
        </button>
      </StripButtons>
    </TabStrip>
    <EditorFrame>
      <CodeArea>
        <Gutter>1</Gutter>
        <FoldMargin />
        <CodeInput aria-label="Text1" />
      </CodeArea>
      <ScrollTrack $size="23px">
        <ScrollArrow type="button" aria-label="Scroll left">
          <Chevron dir="left" />
        </ScrollArrow>
        <EditorThumb />
        <ScrollArrow type="button" aria-label="Scroll right">
          <Chevron dir="right" />
        </ScrollArrow>
      </ScrollTrack>
    </EditorFrame>
  </Editor>
);

const BuildView = () => (
  <BuildPanel>
    <PanelHeader>
      <PanelTitle>Build Output</PanelTitle>
      <PinButton type="button" aria-label="Pin">
        <Pin />
      </PinButton>
      <CloseButton type="button" aria-label="Close">
        <Cross />
      </CloseButton>
    </PanelHeader>
    <BuildBox>
      <BuildBody>
        <BuildText aria-label="Build Output" readOnly />
        <ScrollTrack $vertical>
          <ScrollArrow type="button" aria-label="Scroll up">
            <Chevron dir="up" color="#bfbfbf" />
          </ScrollArrow>
          <ScrollArrow type="button" aria-label="Scroll down" $vertical>
            <Chevron color="#bfbfbf" />
          </ScrollArrow>
        </ScrollTrack>
      </BuildBody>
      <BuildBottom>
        <ScrollTrack>
          <ScrollArrow type="button" aria-label="Scroll left">
            <Chevron dir="left" color="#bfbfbf" />
          </ScrollArrow>
          <ScrollArrow type="button" aria-label="Scroll right">
            <Chevron dir="right" color="#bfbfbf" />
          </ScrollArrow>
        </ScrollTrack>
      </BuildBottom>
    </BuildBox>
  </BuildPanel>
);

const Status = () => (
  <StatusBar>
    <StatusSpace />
    {statusCells.map((cell, i) => (
      <StatusCell key={i} $width={cell.width} $off={cell.off}>
        {cell.label}
      </StatusCell>
    ))}
  </StatusBar>
);

const PathArrow = () => (
  <CrumbArrow>
    <Chevron dir="right" color="#8a8a8a" size={9} />
  </CrumbArrow>
);

const SaveDialog = () => (
  <Dialog role="dialog" aria-label="Save As">
    <DialogTitle>
      <Icon name="keil" size={18} />
      <DialogName>Save As</DialogName>
      <button type="button" aria-label="Close">
        <Cross size={13} weight={0.9} />
      </button>
    </DialogTitle>
    <NavRow>
      <NavButton type="button" aria-label="Back" $gap="19px">
        <Icon name="arrowLeft" size={18} />
      </NavButton>
      <NavButton type="button" aria-label="Forward" $gap="16px">
        <Icon name="arrowRight" size={18} />
      </NavButton>
      <NavButton type="button" aria-label="Recent" $gap="13px">
        <Chevron color="#8a8a8a" size={9} />
      </NavButton>
      <NavButton type="button" aria-label="Up" $gap="8px">
        <Icon name="arrowUp" size={16} />
      </NavButton>
      <AddressBar>
        <Icon name="folder" size={19} />
        <PathArrow />
        <Crumb href="#computer">此电脑</Crumb>
        <PathArrow />
        <Crumb href="#desktop">桌面</Crumb>
        <PathArrow />
        <Crumb href="#led">点亮led小灯</Crumb>
        <PathArrow />
        <AddressEnd>
          <Chevron color="#9a9a9a" />
          <Icon name="refresh" size={17} />
        </AddressEnd>
      </AddressBar>
      <SearchBox>
        <Icon name="search" size={17} />
        <SearchInput aria-label="搜索" placeholder="在 点亮led小灯 中搜索" />
      </SearchBox>
    </NavRow>
    <CommandBar>
      <Command type="button">
        组织
        <Caret color="#dcdcdc" width={10} />
      </Command>
      <Command type="button">新建文件夹</Command>
      <ViewButton type="button" aria-label="View">
        <Icon name="views" />
        <Caret color="#dcdcdc" width={10} />
      </ViewButton>
      <button type="button" aria-label="Help">
        <Icon name="help" />
      </button>
    </CommandBar>
    <DialogBody>
      <SideBar>
        <Places>
          {places.map((place) => (
            <Place key={place.label} $root={place.root} $selected={place.selected}>
              <Icon name={place.icon} />
              {place.label}
            </Place>
          ))}
        </Places>
        <SideScroll>
          <ScrollArrow type="button" aria-label="Scroll up">
            <Chevron dir="up" color="#7a7a7a" size={11} />
          </ScrollArrow>
          <SideThumb />
          <ScrollArrow type="button" aria-label="Scroll down" $vertical>
            <Chevron color="#7a7a7a" size={11} />
          </ScrollArrow>
        </SideScroll>
      </SideBar>
      <FileList>
        <TableClip>
          <Table>
            <thead>
              <tr>
                <Th $width="341px">
                  名称
                  <SortMark>
                    <Chevron dir="up" color="#9a9a9a" size={11} weight={1.4} />
                  </SortMark>
                </Th>
                <Th $width="180px">修改日期</Th>
                <Th $width="150px">类型</Th>
                <Th>大小</Th>
              </tr>
            </thead>
            <TableGap aria-hidden="true">
              <tr />
            </TableGap>
            <tbody>
              {files.map((file) => (
                <tr key={file.name}>
                  <Td>
                    <FileName>
                      <Icon name={file.icon} />
                      {file.name}
                    </FileName>
                  </Td>
                  <Td>{file.date}</Td>
                  <Td>{file.type}</Td>
                  <Td $align="right">{file.size}</Td>
                </tr>
              ))}
            </tbody>
          </Table>
        </TableClip>
        <ScrollTrack $dark>
          <ScrollArrow type="button" aria-label="Scroll left">
            <Chevron dir="left" color="#7a7a7a" size={11} />
          </ScrollArrow>
          <ListThumb />
          <ScrollArrow type="button" aria-label="Scroll right">
            <Chevron dir="right" color="#8a8a8a" size={11} />
          </ScrollArrow>
        </ScrollTrack>
      </FileList>
    </DialogBody>
    <DialogFooter onSubmit={(e) => e.preventDefault()}>
      <Field>
        <FieldLabel htmlFor="file-name">
          文件名(<u>N</u>):
        </FieldLabel>
        <NameInput id="file-name" defaultValue="点亮led小灯.c" />
        <FieldArrow>
          <Chevron color="#b0b0b0" weight={1.4} />
        </FieldArrow>
      </Field>
      <Field>
        <FieldLabel htmlFor="file-type">
          保存类型(<u>T</u>):
        </FieldLabel>
        <TypeSelect id="file-type">
          <option>All Files (*.*)</option>
        </TypeSelect>
        <FieldArrow>
          <Chevron color="#b0b0b0" weight={1.4} />
        </FieldArrow>
      </Field>
      <ActionRow>
        <FolderToggle type="button">
          <Chevron dir="up" color="#c8c8c8" />
          隐藏文件夹
        </FolderToggle>
        <ActionButton type="submit" $primary>
          保存(<u>S</u>)
        </ActionButton>
        <ActionButton type="button">取消</ActionButton>
      </ActionRow>
    </DialogFooter>
    <ResizeGrip width="11" height="11" viewBox="0 0 11 11" fill="#c8c8c8">
      <path d="M8 0h2v2H8zM8 4h2v2H8zM8 8h2v2H8zM4 4h2v2H4zM4 8h2v2H4zM0 8h2v2H0z" />
    </ResizeGrip>
    <Callout $left="54px" $top="449px" $width="227px" $height="43px" />
    <CalloutNumber $left="20px" $top="460px">1.</CalloutNumber>
    <Callout $left="660px" $top="535px" $width="147px" $height="48px" />
    <CalloutNumber $left="623px" $top="549px">2.</CalloutNumber>
  </Dialog>
);

const App = () => {
  return (
    <Page>
      <GlobalStyle />
      <MenuBar>
        {menus.map((menu) => (
          <MenuItem key={menu} type="button">
            {menu}
          </MenuItem>
        ))}
      </MenuBar>
      <Toolbars />
      <Workspace>
        <ProjectView />
        <EditorView />
      </Workspace>
      <BuildView />
      <Status />
      <LevelMeter>
        <MeterBars />
      </LevelMeter>
      <Watermark>CSDN @MrSaint</Watermark>
      <SaveDialog />
    </Page>
  );
};

export default App;
